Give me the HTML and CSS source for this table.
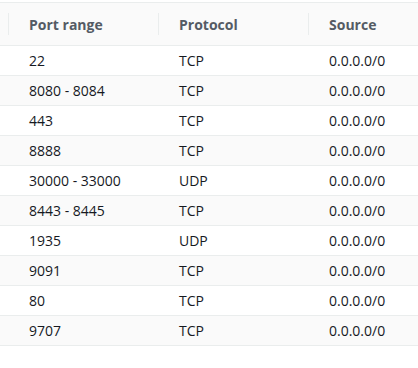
FILE: index.html
```html
<!DOCTYPE html>
<html>
<head>
<meta charset="utf-8">
<link rel="stylesheet" href="styles.css">
</head>
<body>
<table class="rules">
  <colgroup>
    <col class="c-lead"><col class="c-col"><col class="c-col"><col>
  </colgroup>
  <thead>
    <tr>
      <th></th>
      <th><div class="th"><span class="sep"></span><span>Port range</span></div></th>
      <th><div class="th"><span class="sep"></span><span>Protocol</span></div></th>
      <th><div class="th"><span class="sep"></span><span>Source</span></div></th>
    </tr>
  </thead>
  <tbody>
    <tr><td></td><td>22</td><td>TCP</td><td>0.0.0.0/0</td></tr>
    <tr><td></td><td>8080 - 8084</td><td>TCP</td><td>0.0.0.0/0</td></tr>
    <tr><td></td><td>443</td><td>TCP</td><td>0.0.0.0/0</td></tr>
    <tr><td></td><td>8888</td><td>TCP</td><td>0.0.0.0/0</td></tr>
    <tr><td></td><td>30000 - 33000</td><td>UDP</td><td>0.0.0.0/0</td></tr>
    <tr><td></td><td>8443 - 8445</td><td>TCP</td><td>0.0.0.0/0</td></tr>
    <tr><td></td><td>1935</td><td>UDP</td><td>0.0.0.0/0</td></tr>
    <tr><td></td><td>9091</td><td>TCP</td><td>0.0.0.0/0</td></tr>
    <tr><td></td><td>80</td><td>TCP</td><td>0.0.0.0/0</td></tr>
    <tr><td></td><td>9707</td><td>TCP</td><td>0.0.0.0/0</td></tr>
  </tbody>
</table>
</body>
</html>
```

FILE: styles.css
```css
html, body {
  margin: 0;
  padding: 0;
  background: #ffffff;
}
body {
  padding-top: 2px;
  font-family: "Open Sans", "Noto Sans", sans-serif;
  font-size: 14px;
  color: #16191f;
}
.rules {
  width: 418px;
  border-collapse: collapse;
  table-layout: fixed;
  border-top: 1px solid #eaeded;
}
.c-lead { width: 8px; }
.c-col { width: 150px; }
.rules th {
  background: #fafafa;
  height: 42px;
  padding: 0;
  border-bottom: 1px solid #eaeded;
  text-align: left;
  font-weight: 700;
  color: #545b64;
}
.th {
  display: flex;
  align-items: center;
  height: 42px;
}
.sep {
  width: 1px;
  height: 22px;
  background: #eaeded;
  margin-right: 20px;
  flex: none;
}
.rules td {
  height: 29px;
  padding: 0 0 0 21px;
  border-bottom: 1px solid #eaeded;
  white-space: nowrap;
}
.rules td:first-child {
  padding: 0;
}
.rules tbody tr:nth-child(even) td {
  background: #fafafa;
}
```
